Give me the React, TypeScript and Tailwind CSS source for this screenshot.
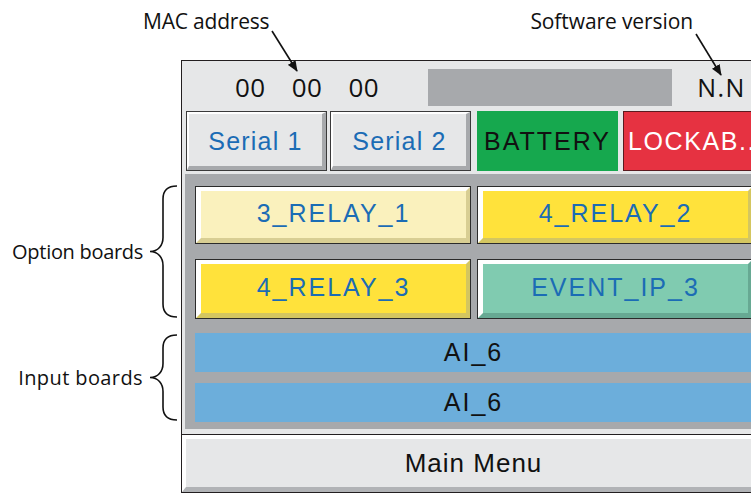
import React from "react";

function Brace({ h }: { h: number }) {
  const m = h / 2;
  return (
    <svg width="31" height={h} viewBox={`0 0 31 ${h}`} className="shrink-0">
      <path
        d={`M29,1 C20,1 15,5 15,14 L15,${m - 14} C15,${m - 6} 10,${m} 2,${m} C10,${m} 15,${m + 6} 15,${m + 14} L15,${h - 14} C15,${h - 5} 20,${h - 1} 29,${h - 1}`}
        fill="none"
        stroke="#111"
        strokeWidth="1.6"
      />
    </svg>
  );
}

function OptBtn({ label, tone }: { label: string; tone: "pale" | "yellow" | "teal" }) {
  const inner =
    tone === "pale"
      ? "bg-[#faf1bd] border-b-[#d8ce93] border-r-[#d8ce93]"
      : tone === "yellow"
      ? "bg-[#ffe23b] border-b-[#d4c660] border-r-[#d4c660]"
      : "bg-[#80cbb0] border-b-[#67a993] border-r-[#67a993]";
  return (
    <div className="flex-1 border border-[#2b2b2b] flex">
      <div
        className={`flex-1 flex items-center justify-center border-t-[4px] border-l-[5px] border-b-[5px] border-r-[4px] border-t-white border-l-white ${inner} text-[25px] tracking-[2px] text-[#1b6cb5] pb-[2px]`}
      >
        {label}
      </div>
    </div>
  );
}

function SerialBtn({ label, className }: { label: string; className: string }) {
  return (
    <div className={`border border-[#3a3a3a] flex w-[141px] h-[60px] shrink-0 ${className}`}>
      <div className="flex-1 flex items-center justify-center bg-[#e6e7e8] border-t-[2px] border-l-[2px] border-t-white border-l-white border-b-[4px] border-r-[4px] border-b-[#a7a9ac] border-r-[#a7a9ac] text-[25px] tracking-[1.2px] text-[#1b6cb5] pt-[3px]">
        {label}
      </div>
    </div>
  );
}

export default function App() {
  return (
    <div className="relative w-[751px] h-[496px] overflow-hidden bg-white font-['Liberation_Sans',Arial,sans-serif]">
      {/* annotation header */}
      <div className="h-[60px] flex font-['Open_Sans',sans-serif] text-[21px] text-[#111] leading-none">
        <span className="ml-[143px] mt-[11px] tracking-[-0.2px]">MAC address</span>
        <span className="ml-[261px] mt-[11px] tracking-[-0.1px]">Software version</span>
      </div>

      <div className="flex">
        {/* left annotation column */}
        <div className="w-[181px] shrink-0 flex flex-col font-['Open_Sans',sans-serif] text-[20px] text-[#111] leading-none">
          <div className="mt-[125px] h-[133px] flex items-center justify-end pr-[2px]">
            <span className="mr-[5px] mt-[1px] tracking-[-0.3px]">Option boards</span>
            <Brace h={133} />
          </div>
          <div className="mt-[16px] h-[87px] flex items-center justify-end pr-[2px]">
            <span className="mr-[5px] mt-[1px] tracking-[0.4px]">Input boards</span>
            <Brace h={87} />
          </div>
        </div>

        {/* device frame */}
        <div className="w-[585px] shrink-0 border border-[#231f20] bg-[#e6e7e8] flex flex-col">
          {/* top bar */}
          <div className="h-[50px] flex items-center">
            <div className="ml-[53px] flex gap-[26px] font-['Open_Sans',sans-serif] text-[26px] text-[#111] leading-none mt-[1px]">
              <span className="tracking-[0.5px]">00</span>
              <span className="tracking-[0.5px]">00</span>
              <span className="tracking-[0.5px]">00</span>
            </div>
            <div className="ml-[49px] w-[244px] h-[37px] bg-[#a7a9ac] mt-[3px]" />
            <span className="ml-[25px] font-['Open_Sans',sans-serif] text-[25px] tracking-[1.5px] text-[#111] leading-none mt-[2px]">
              N.N
            </span>
          </div>

          {/* row of status buttons */}
          <div className="h-[60px] flex pl-[4px]">
            <SerialBtn label="Serial 1" className="" />
            <SerialBtn label="Serial 2" className="ml-[3px]" />
            <div className="ml-[6px] w-[141px] h-[60px] shrink-0 bg-[#16a84e] flex items-center justify-center text-[25px] tracking-[2px] text-[#111] pt-[2px]">
              BATTERY
            </div>
            <div className="ml-[5px] w-[141px] h-[60px] shrink-0 bg-[#e63241] border border-[#5a1a1f] flex items-center pl-[4px] pt-[2px] text-[25px] tracking-[1.6px] text-white whitespace-nowrap overflow-hidden">
              LOCKAB..
            </div>
          </div>

          {/* boards section */}
          <div className="mt-[3px] mx-[3px] bg-[#a7a9ac] pl-[10px] pt-[12px] pb-[7px] flex flex-col">
            <div className="grid grid-cols-[276px_276px] gap-x-[6px] gap-y-[15px]">
              <div className="h-[58px] flex flex-col"><OptBtn label="3_RELAY_1" tone="pale" /></div>
              <div className="h-[58px] flex flex-col"><OptBtn label="4_RELAY_2" tone="yellow" /></div>
              <div className="h-[60px] flex flex-col"><OptBtn label="4_RELAY_3" tone="yellow" /></div>
              <div className="h-[60px] flex flex-col"><OptBtn label="EVENT_IP_3" tone="teal" /></div>
            </div>
            <div className="mt-[14px] w-[557px] h-[39px] bg-[#6caedb] flex items-center justify-center text-[25px] tracking-[2px] text-[#111]">
              AI_6
            </div>
            <div className="mt-[11px] w-[557px] h-[39px] bg-[#6caedb] flex items-center justify-center text-[25px] tracking-[2px] text-[#111]">
              AI_6
            </div>
          </div>

          {/* separator + main menu */}
          <div className="mt-[5px] border-t border-[#231f20] flex">
            <div className="flex-1 h-[57px] flex items-center justify-center bg-[#e6e7e8] border-t-[4px] border-l-[4px] border-t-white border-l-white border-b-[5px] border-r-[4px] border-b-[#b1b3b6] border-r-[#b1b3b6] text-[26px] tracking-[1px] text-[#111]">
              Main Menu
            </div>
          </div>
        </div>
      </div>

      {/* annotation arrows */}
      <svg className="absolute inset-0 pointer-events-none" width="751" height="496" viewBox="0 0 751 496">
        <defs>
          <marker id="ah" markerWidth="11" markerHeight="9" refX="10" refY="4.5" orient="auto" markerUnits="userSpaceOnUse">
            <path d="M0,0 L11,4.5 L0,9 z" fill="#111" />
          </marker>
        </defs>
        <line x1="272" y1="31" x2="297" y2="71" stroke="#111" strokeWidth="1.6" markerEnd="url(#ah)" />
        <line x1="696" y1="34" x2="721" y2="75" stroke="#111" strokeWidth="1.6" markerEnd="url(#ah)" />
      </svg>
    </div>
  );
}
